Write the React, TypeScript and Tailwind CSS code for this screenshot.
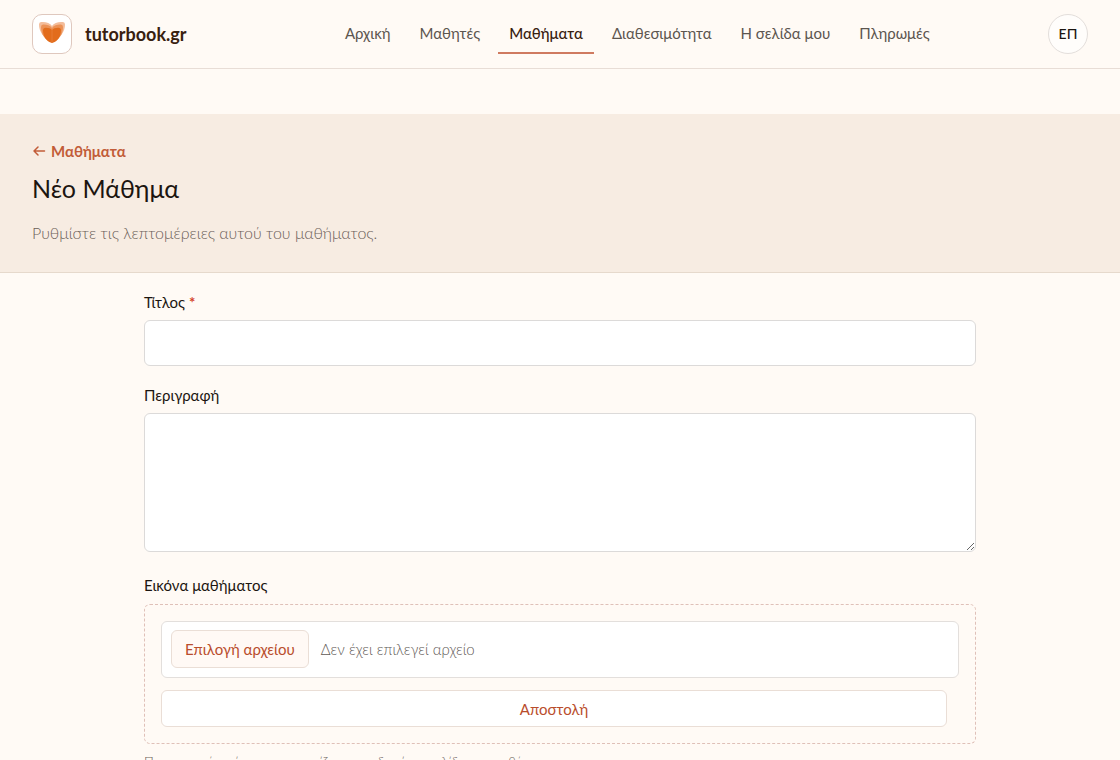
import React, { useState } from 'react';

interface NavItem {
  label: string;
  href: string;
  active?: boolean;
}

const NAV_ITEMS: NavItem[] = [
  { label: 'Αρχική', href: '#home' },
  { label: 'Μαθητές', href: '#students' },
  { label: 'Μαθήματα', href: '#lessons', active: true },
  { label: 'Διαθεσιμότητα', href: '#availability' },
  { label: 'Η σελίδα μου', href: '#page' },
  { label: 'Πληρωμές', href: '#payments' },
];

const Logo: React.FC = () => (
  <span className="flex h-10 w-10 items-center justify-center rounded-[10px] border border-[#dfc8be] bg-white">
    <svg viewBox="0 0 40 40" className="h-10 w-10 shrink-0" aria-hidden="true">
      <path d="M20 12 C18 8.500 13 7.500 9 8 Q7 8.200 7 10.500 C7 17 11 24 20 28 C29 24 33 17 33 10.500 Q33 8.200 31 8 C27 7.500 22 8.500 20 12Z" fill="#f3bd9b" />
      <path d="M20 14 C18 11 14 10.300 11 10.500 Q9 10.800 9 13 C9 19 12 26 20 28.500 C28 26 31 19 31 13 Q31 10.800 29 10.500 C26 10.300 22 11 20 14Z" fill="#eb9257" />
      <path d="M20 16 C18.500 14.200 15 13.500 12.500 14 Q11 14.300 11 16 C11 22 14 27.500 20 29 C26 27.500 29 22 29 16 Q29 14.300 27.500 14 C25 13.500 21.500 14.200 20 16Z" fill="#e26c1c" />
      <path d="M20 15V28" stroke="#ec8743" strokeWidth="0.600" />
    </svg>
  </span>
);

const Header: React.FC = () => (
  <header className="border-b border-[#e8ddd6]">
    <div className="flex h-17 items-center justify-between px-8">
      <a href="#home" className="flex items-center gap-[13px] text-lg font-bold text-[#38200f]">
        <Logo />
        tutorbook.gr
      </a>
      <nav className="ml-10 flex items-center gap-[7px]">
        {NAV_ITEMS.map((item) => (
          <a
            key={item.label}
            href={item.href}
            aria-current={item.active ? 'page' : undefined}
            className={
              item.active
                ? 'border-b-2 border-[#cf7a60] px-[11px] py-[9px] text-[15px] leading-5 font-medium text-[#38200f]'
                : 'border-b-2 border-transparent px-[11px] py-[9px] text-[15px] leading-5 text-[#5c554f]'
            }
          >
            {item.label}
          </a>
        ))}
      </nav>
      <button
        type="button"
        aria-label="Λογαριασμός ΕΠ"
        className="h-10 w-10 rounded-full border border-[#e3dedb] bg-[#fffdfb] text-sm font-medium"
      >
        ΕΠ
      </button>
    </div>
  </header>
);

const PageHeading: React.FC = () => (
  <section className="mt-[45px] border-b border-[#e6d9cc] bg-[#f7ece2] px-8 pt-[27px] pb-[27px]">
    <a href="#lessons" className="flex w-fit items-center gap-[5px] text-[15px] leading-5 font-bold text-[#c25c38]">
      <svg
        viewBox="0 0 14 14"
        className="h-[14px] w-[14px]"
        fill="none"
        stroke="currentColor"
        strokeWidth="1.500"
        strokeLinecap="round"
        strokeLinejoin="round"
        aria-hidden="true"
      >
        <path d="M12.500 7H2M6 3L2 7L6 11" />
      </svg>
      Μαθήματα
    </a>
    <h1 className="mt-[11px] text-[25px] leading-8">Νέο Μάθημα</h1>
    <p className="mt-[17px] text-base leading-6 font-light text-[#6b6058]">
      Ρυθμίστε τις λεπτομέρειες αυτού του μαθήματος.
    </p>
  </section>
);

const LessonForm: React.FC = () => {
  const [fileName, setFileName] = useState('');

  return (
    <form className="mx-auto max-w-4xl px-8 pt-[19px] pb-8" onSubmit={(e) => e.preventDefault()}>
      <label htmlFor="title" className="block text-[15px] leading-5">
        Τίτλος <span className="font-bold text-[#d4432c]">*</span>
      </label>
      <input
        id="title"
        type="text"
        required
        className="mt-2 block h-[46px] w-full rounded-md border border-[#dcdad9] bg-white px-3 shadow-none outline-none focus:border-[#cf7a60]"
      />

      <label htmlFor="description" className="mt-[19px] block text-[15px] leading-5">
        Περιγραφή
      </label>
      <textarea
        id="description"
        className="mt-2 block h-[139px] w-full resize-y rounded-md border border-[#dcdad9] bg-white px-3 py-2 outline-none focus:border-[#cf7a60]"
      />

      <h2 className="mt-[23px] text-[15px] leading-5">Εικόνα μαθήματος</h2>
      <div className="mt-[9px] rounded-md border border-dashed border-[#dfc0b8] p-4">
        <label
          htmlFor="image"
          className="flex h-[57px] cursor-pointer items-center gap-3 rounded-md border border-[#e3dfdc] bg-white px-[9px] pb-px text-[15px]"
        >
          <span className="rounded-md border border-[#eaded6] bg-[#fff9f5] px-[13px] py-2 leading-5 text-[#b94d2c]">
            Επιλογή αρχείου
          </span>
          <span className="font-light text-[#5f5a56]">{fileName || 'Δεν έχει επιλεγεί αρχείο'}</span>
          <input
            id="image"
            type="file"
            accept="image/*"
            className="sr-only"
            onChange={(e) => setFileName(e.target.files?.[0]?.name ?? '')}
          />
        </label>
        <div className="mt-3 pr-3">
          <button
            type="submit"
            className="block h-[37px] w-full rounded-md border border-[#eaded6] bg-white text-[15px] leading-5 text-[#b94d2c]"
          >
            Αποστολή
          </button>
        </div>
      </div>
      <p className="mt-2 text-[13px] leading-5 font-light text-[#6b6058]">
        Προαιρετική εικόνα που εμφανίζεται στη δημόσια σελίδα του μαθήματος.
      </p>
    </form>
  );
};

const App: React.FC = () => (
  <div className="min-h-screen bg-[#fffaf5] font-[Lato,'Noto_Sans',sans-serif] text-[#1c1510]">
    <Header />
    <main>
      <PageHeading />
      <LessonForm />
    </main>
  </div>
);

export default App;
